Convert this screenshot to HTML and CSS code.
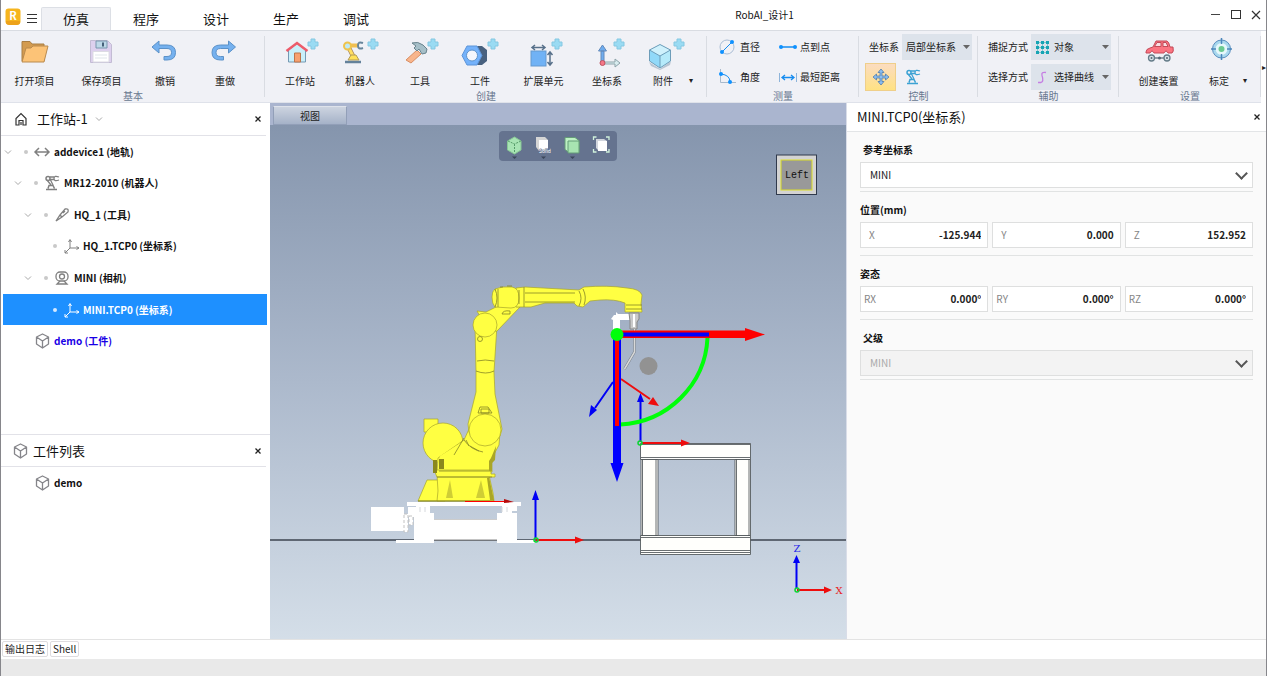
FILE: index.html
```html
<!DOCTYPE html>
<html lang="zh-CN">
<head>
	<meta charset="utf-8">
	<title>RobAI_设计1</title>
	<link rel="stylesheet" href="styles.css">
</head>
<body>
<!-- Shared symbols -->
<svg class="symbols" aria-hidden="true">
	<symbol id="plus" viewBox="0 0 12 12"><path d="M4 1h4v3h3v4H8v3H4V8H1V4h3z" fill="#9adbf3" stroke="#85c8e2"/></symbol>
	<symbol id="cube" viewBox="0 0 18 18"><path d="M9.500 2l6 3v7l-6 4-6-4V5zM3.500 5l6 4 6-4M9.500 9v7" fill="none" stroke="#85858a" stroke-width="1.3" stroke-linejoin="round"/></symbol>
	<symbol id="axes" viewBox="0 0 18 18"><path d="M8 3v8h9M8 11l-5 5M6.500 5L8 2.500 9.500 5M14.500 9.500L17 11l-2.500 1.500M3 13v3h3" fill="none" stroke="currentColor"/></symbol>
	<symbol id="chevron" viewBox="0 0 14 14"><path d="M4 5.500l3 3 3-3" fill="none" stroke="#a9a9a9"/></symbol>
	<symbol id="cross" viewBox="0 0 10 10"><path d="M2.500 2.500l5 5M7.500 2.500l-5 5" stroke="#222" stroke-width="1.300"/></symbol>
	<symbol id="arm" viewBox="0 0 18 18"><path d="M3 15.500h11M5 14.500l1-3h4l1.500 3" fill="none" stroke="currentColor" stroke-width="1.500"/><path d="M8 11L4 6M10 11L7 5M7 3h4M7 5.500h4M16 3q-5-2-5 1.500t5 1.500" fill="none" stroke="currentColor" stroke-width="1.300"/><circle cx="5" cy="4.500" r="2" fill="none" stroke="currentColor" stroke-width="1.500"/></symbol>
</svg>

<div class="window">
	<header class="titleBar">
		<svg class="logo" viewBox="0 0 16 17"><rect x=".500" y=".500" width="15" height="16" rx="3" fill="#f6b51e"/><path d="M1 13h14v1q0 3-3 3H4q-3 0-3-3z" fill="#eda21a"/><text x="8" y="12" class="logoText">R</text></svg>
		<button class="menuButton" aria-label="菜单"><svg width="12" height="11"><path d="M1 1.500h10M1 5.500h10M1 9.500h10" stroke="#333"/></svg></button>
		<nav class="tabs">
			<button class="tab active">仿真</button>
			<button class="tab">程序</button>
			<button class="tab">设计</button>
			<button class="tab">生产</button>
			<button class="tab">调试</button>
		</nav>
		<div class="windowTitle">RobAI_设计1</div>
		<div class="windowButtons">
			<button aria-label="最小化"><svg width="12" height="12"><path d="M1 5.500h9" stroke="#444"/></svg></button>
			<button aria-label="最大化"><svg width="12" height="12"><rect x="1.500" y="1.500" width="9" height="8" fill="none" stroke="#333"/></svg></button>
			<button aria-label="关闭"><svg width="12" height="12"><path d="M2 2l8 8M10 2l-8 8" stroke="#333" stroke-width="1.200"/></svg></button>
		</div>
	</header>

	<div class="ribbon">
		<section class="group">
			<div class="groupBody">
				<button class="tool wide">
					<svg viewBox="0 0 36 32"><path d="M5 24V4.500h8l2 2.500h12v17z" fill="#d39b50" stroke="#a97e45"/><path d="M5 25l4-14h5l2-2h15l-4 16z" fill="#fcc377" stroke="#b98a4e"/></svg>
					打开项目</button>
				<button class="tool wide">
					<svg viewBox="0 0 36 32"><path d="M6.500 3.500h17l4 4v18h-21z" fill="#ddd0ee" stroke="#c3bcd4"/><path d="M12 4h11v7H12z" fill="#bed8e8" stroke="#7996ad"/><path d="M19 5.500v4" stroke="#456079" stroke-width="2"/><path d="M9 14.500h16V25H9z" fill="#fff" stroke="#dcdbe3"/><path d="M11 18h12M11 21h12" stroke="#dfe5ea"/></svg>
					保存项目</button>
				<button class="tool">
					<svg viewBox="0 0 36 32"><path d="M5 10l7-6v4h8q8.500 0 8.500 7.500T20 23h-3v-3.500h3q4.500 0 4.500-4t-4.500-4h-8V16z" fill="#75b1ef" stroke="#5b91c8" stroke-linejoin="round"/></svg>
					撤销</button>
				<button class="tool">
					<svg viewBox="0 0 36 32"><path d="M28.500 10l-7-6v4h-8Q5 8 5 15.500T13.500 23h3v-3.500h-3q-4.500 0-4.500-4t4.500-4h8V16z" fill="#75b1ef" stroke="#5b91c8" stroke-linejoin="round"/></svg>
					重做</button>
			</div>
			<div class="groupName">基本</div>
		</section>

		<section class="group create">
			<div class="groupBody">
				<button class="tool">
					<svg viewBox="0 0 36 32"><path d="M6.500 25V13L15 6.500l8.500 6.500v12z" fill="#c9effa" stroke="#7499b3"/><path d="M12.500 25v-9h6v9z" fill="#f7a06f" stroke="#bd744a"/><path d="M4.500 14L15 6l10.500 8" fill="none" stroke="#ed5b6a" stroke-width="2.500"/><use href="#plus" x="25" y="1" width="12" height="12"/></svg>
					工作站</button>
				<button class="tool">
					<svg viewBox="0 0 36 32"><path d="M3 25h16" stroke="#64829b" stroke-width="2.500"/><path d="M6 9l5 10" stroke="#a4835a" stroke-width="4.500"/><path d="M6 9l5 10" stroke="#ffdf62" stroke-width="3"/><path d="M9 8.500h7" stroke="#f0be50" stroke-width="4"/><circle cx="5.500" cy="9" r="3.500" fill="#bfeaf5" stroke="#efc34c" stroke-width="2"/><path d="M21 6q-5-2-5 2.500t5 2.500" fill="none" stroke="#67859b" stroke-width="2"/><path d="M6 23l3-5h5l3 5z" fill="#ffe159" stroke="#b29b58"/><use href="#plus" x="25" y="1" width="12" height="12"/></svg>
					机器人</button>
				<button class="tool">
					<svg viewBox="0 0 36 32"><path d="M4 23L15 13l4 4L9 26z" fill="#f8b58c" stroke="#d98e63"/><path d="M10 6q6-2 11 2l4 4-1 4-4 1-3-5-2 2-3-3 2-2z" fill="#a6bfc8" stroke="#69838d" stroke-linejoin="round"/><use href="#plus" x="25" y="1" width="12" height="12"/></svg>
					工具</button>
				<button class="tool">
					<svg viewBox="0 0 36 32"><path d="M12 9h8l5 4v11l-5 4h-8z" fill="#48617f"/><path d="M5 9h10l5 9.500-5 9.500H5L0 18.500z" fill="#74b2fb" stroke="#5c94d8"/><circle cx="10" cy="18.500" r="5.500" fill="#f4f6fc" stroke="#5e93ca"/><use href="#plus" x="25" y="1" width="12" height="12"/></svg>
					工件</button>
				<button class="tool wide">
					<svg viewBox="0 0 36 32"><rect x="5" y="14" width="15" height="15" fill="#70b2f5" stroke="#6499ce"/><path d="M6 10.500h13M24 15v13M9 8l-3 2.500L9 13M16 8l3 2.500-3 2.500M21.500 18l2.500-3 2.500 3M21.500 25l2.500 3 2.500-3" fill="none" stroke="#57708a" stroke-width="1.500"/><use href="#plus" x="25" y="1" width="12" height="12"/></svg>
					扩展单元</button>
				<button class="tool">
					<svg viewBox="0 0 36 32"><path d="M12 14h3v12h-3zM9.500 14l4-6 4 6z" fill="#6eacef" stroke="#638abb"/><path d="M15 25h11v-3l5 4-5 4v-3H15z" fill="#d8ecef" stroke="#8da3a9"/><circle cx="13.500" cy="26" r="2.500" fill="#f47787" stroke="#bf5362"/><use href="#plus" x="24" y="1" width="12" height="12"/></svg>
					坐标系</button>
				<button class="tool small">
					<svg viewBox="0 0 36 32"><path d="M15 32L4 25l2 4 9 4 10-5 1-4z" fill="#b8c5d2"/><path d="M4.500 13L15 7.500 25.500 13v11L15 31 4.500 24z" fill="#91d9f9"/><path d="M4.500 13L15 7.500 25.500 13 15 19z" fill="#cff1fc"/><path d="M15 19l10.500-6v11L15 31z" fill="#b5eafa"/><path d="M4.500 13L15 7.500 25.500 13v11L15 31 4.500 24V13L15 19l10.500-6M15 19v12" fill="none" stroke="#6d9db9"/><use href="#plus" x="28" y="1" width="12" height="12"/></svg>
					附件</button>
				<button class="more" aria-label="更多附件">&#9662;</button>
			</div>
			<div class="groupName">创建</div>
		</section>

		<section class="group measure">
			<div class="groupBody">
				<div class="measureGrid">
					<button class="line"><svg width="18" height="18"><circle cx="9" cy="9" r="7" fill="none" stroke="#aabdd5"/><path d="M4 14L14 4" stroke="#158cf0"/><circle cx="4" cy="14" r="2" fill="#0e91ff"/><circle cx="14" cy="4" r="2" fill="#0e91ff"/></svg>直径</button>
					<button class="line"><svg width="20" height="18"><path d="M2 9h16" stroke="#158cf0" stroke-width="1.500"/><circle cx="3" cy="9" r="2" fill="#0e91ff"/><circle cx="17" cy="9" r="2" fill="#0e91ff"/></svg>点到点</button>
					<button class="line"><svg width="18" height="18"><path d="M2.500 1v13.500H18" fill="none" stroke="#a8b9cc"/><path d="M3 6q9 1 9 8" fill="none" stroke="#158cf0"/><circle cx="3" cy="6" r="2" fill="#0e91ff"/><circle cx="12" cy="14" r="2" fill="#0e91ff"/></svg>角度</button>
					<button class="line"><svg width="20" height="18"><path d="M1.500 5v9M18.500 5v9" stroke="#8eb4da"/><path d="M4 9.500h12M7 7L4 9.500 7 12M13 7l3 2.500-3 2.500" fill="none" stroke="#158cf0" stroke-width="1.300"/></svg>最短距离</button>
				</div>
			</div>
			<div class="groupName">测量</div>
		</section>

		<section class="group control">
			<div class="groupBody rows">
				<div class="field">
					<label for="frameSelect">坐标系</label>
					<div class="combo"><select id="frameSelect"><option>局部坐标系</option></select></div>
				</div>
				<div class="field">
					<button class="moveButton" aria-label="移动"><svg width="18" height="18"><path d="M9 1l3 3.500h-2V8h3.500V6L17 9l-3.500 3v-2H10v3.500h2L9 17l-3-3.500h2V10H4.500v2L1 9l3.500-3v2H8V4.500H6z" fill="#8abdf0" stroke="#517dac" stroke-width=".800"/></svg></button>
					<button class="robotButton" aria-label="机器人控制"><svg width="18" height="18"><use href="#arm"/></svg></button>
				</div>
			</div>
			<div class="groupName">控制</div>
		</section>

		<section class="group assist">
			<div class="groupBody rows">
				<div class="field">
					<label for="snapSelect">捕捉方式</label>
					<div class="combo"><svg width="15" height="15"><path d="M1 2.500h13M1 7.500h13M1 12.500h13M2.500 1v13M7.500 1v13M12.500 1v13" stroke="#7cc8d0"/><path d="M2.500 1v3M2.500 6v3M2.500 11v3M7.500 1v3M7.500 6v3M7.500 11v3M12.500 1v3M12.500 6v3M12.500 11v3" stroke="#16a4b4" stroke-width="3"/></svg><select id="snapSelect"><option>对象</option></select></div>
				</div>
				<div class="field">
					<label for="pickSelect">选择方式</label>
					<div class="combo"><svg width="15" height="15"><path d="M11 2.500q-5-1-4 3 2 6-1 7H3" fill="none" stroke="#c57ee3" stroke-width="1.300"/></svg><select id="pickSelect"><option>选择曲线</option></select></div>
				</div>
			</div>
			<div class="groupName">辅助</div>
		</section>

		<section class="group settings">
			<div class="groupBody">
				<button class="tool wide">
					<svg viewBox="0 0 36 32"><path d="M5 15q0-3 4-4l3-1 3-6h11q2 1 3 6h3q1 5-1 6h-4q-2-4-4 0H13q-2-4-4 0H5z" fill="#fb7481" stroke="#c34b59"/><path d="M13.500 9.500l2.500-4h4v4zM22 5.500h3l2 4h-5z" fill="#f8dfe3" stroke="#c34b59"/><path d="M12 21h16" stroke="#70818c" stroke-width="1.500"/><g fill="#d8e4e9" stroke="#657c89" stroke-width="1.300"><circle cx="10.500" cy="21" r="3"/><circle cx="26" cy="21" r="3"/></g><g fill="#556775"><circle cx="10.500" cy="21" r="1"/><circle cx="18.500" cy="21" r="1.500"/><circle cx="26" cy="21" r="1"/></g></svg>
					创建装置</button>
				<button class="tool">
					<svg viewBox="0 0 36 32"><circle cx="20.500" cy="12" r="7.500" fill="#e6f7fb" stroke="#a8d8ee" stroke-width="3"/><circle cx="20.500" cy="12" r="9" fill="none" stroke="#598ebe"/><circle cx="20.500" cy="12" r="3" fill="#6bca91"/><path d="M20.500 1v6M20.500 17v6M10 12h5M26 12h5" stroke="#4c86bb" stroke-width="1.500"/></svg>
					标定</button>
				<button class="more" aria-label="更多设置">&#9662;</button>
			</div>
			<div class="groupName">设置</div>
		</section>
		<button class="scrollRibbon" aria-label="展开">&#9656;</button>
	</div>

	<main class="workspace">
		<aside class="side">
			<section class="station">
				<div class="panelHead">
					<svg width="14" height="14"><path d="M2 6.500V13h3V8.500h4V13h3V6.500L7 1.500zM7 10v3" fill="none" stroke="#333" stroke-width="1.200"/></svg>
					<h2>工作站-1</h2>
					<svg width="14" height="14"><use href="#chevron"/></svg>
					<button class="close" aria-label="关闭"><svg width="10" height="10"><use href="#cross"/></svg></button>
				</div>
				<ul class="tree">
					<li><svg class="fold"><use href="#chevron"/></svg><i class="dot"></i><svg class="icon" viewBox="0 0 18 18"><path d="M2 9h14M6 5L2 9l4 4M12 5l4 4-4 4" fill="none" stroke="currentColor" stroke-width="1.500"/></svg>addevice1 (地轨)</li>
					<li class="level1"><svg class="fold"><use href="#chevron"/></svg><i class="dot"></i><svg class="icon"><use href="#arm"/></svg>MR12-2010 (机器人)</li>
					<li class="level2"><svg class="fold"><use href="#chevron"/></svg><i class="dot"></i><svg class="icon" viewBox="0 0 18 18"><path d="M3 15l4-6 5-6q4-1 3 3l-6 5zM7 9l2 2M10 7l2-2" fill="none" stroke="currentColor" stroke-width="1.300"/></svg>HQ_1 (工具)</li>
					<li class="level3"><span class="fold"></span><i class="dot"></i><svg class="icon"><use href="#axes"/></svg>HQ_1.TCP0 (坐标系)</li>
					<li class="level2"><svg class="fold"><use href="#chevron"/></svg><i class="dot"></i><svg class="icon" viewBox="0 0 18 18"><g fill="none" stroke="currentColor" stroke-width="1.300"><rect x="3" y="3" width="12" height="9" rx="4"/><circle cx="9" cy="7.500" r="2.500"/><path d="M7 12l-3 3h10l-3-3"/></g></svg>MINI (相机)</li>
					<li class="level3 selected"><span class="fold"></span><i class="dot"></i><svg class="icon"><use href="#axes"/></svg>MINI.TCP0 (坐标系)</li>
					<li class="part"><span class="fold"></span><i class="dot none"></i><svg class="icon"><use href="#cube"/></svg>demo (工件)</li>
				</ul>
			</section>
			<section class="partList">
				<div class="panelHead">
					<svg width="18" height="18"><use href="#cube"/></svg>
					<h2>工件列表</h2>
					<button class="close" aria-label="关闭"><svg width="10" height="10"><use href="#cross"/></svg></button>
				</div>
				<ul class="tree single">
					<li><span class="fold"></span><i class="dot none"></i><svg class="icon"><use href="#cube"/></svg>demo</li>
				</ul>
			</section>
		</aside>

		<section class="viewer">
			<div class="viewTabs"><button class="viewTab">视图</button></div>
			<div class="canvas">
				<svg class="scene" viewBox="270 125 576 514" preserveAspectRatio="xMidYMid meet">
					<path d="M0 540h2000" stroke="#3c454f" stroke-width="1.500"/>

					<!-- Ground rail -->
					<g fill="#fff">
						<path d="M407 502h114v4h-4v5h-5v2h5v27h18v3h-38v-3h-63v3h-38v-3h18v-23h-6v-10h8v-1h-9zM434 513v7h63v-7h5v-7h-72v7z" fill-rule="evenodd"/>
						<path d="M371 507h33v24h-33z"/>
						<path d="M404 514h4v18h-4zM409 516h4v9h-4z" stroke="#c3c3c3" stroke-dasharray="3 2"/>
						<path d="M434 520h63v19.500h-63z"/>
					</g>
					<path d="M434 519.500h63" stroke="#ccc"/>
					<path d="M434 540h63" stroke="#888"/>
					<path d="M420 507v5M425 507v5M502 507v5M507 507v5" stroke="#d5d8dc"/>

					<!-- Robot arm -->
					<g fill="#ffff42" stroke="#a8a52a" stroke-width=".700" stroke-linejoin="round">
						<path d="M427 480h18v21h-27z"/>
						<path d="M437 475h52l4 18 1 8h-57l1-10z"/>
						<path d="M424 419h14v13h-14z"/>
						<circle cx="443" cy="443" r="20"/>
						<path d="M438 458l26-18 5-11 31 3-1 13-7 13v14h-55z"/>
						<path d="M434 470h57v4h4v3h-58z"/>
						<path d="M475 325l1 47v20l-8 32q0 18 16 21 16-1 18-16l-7-35-1-22 3-47z"/>
						<circle cx="485" cy="430" r="16"/>
						<path d="M477 311l9 1 14-7 20 2-23 24-8 1z"/>
						<circle cx="485" cy="325" r="12"/>
						<path d="M516 288l9-1 54 3 5-3q24-2 43 1 13 1 15 7l-1 9 1 8h-17v-9q-10-4-25-3l-10 1-7 6-6-1-3-3h-29l-14 4h-15z"/>
						<path d="M495 289q7-3 17-2 7 1 7 11t-8 10l-16-1q-3-3-3-10 0-6 3-8z"/>
					</g>
					<path d="M440 456l24-15v20l-22 8z" fill="#ffff42"/>
					<g fill="none" stroke="#858526" stroke-width=".800">
						<path d="M495 289q4 9 0 18M498 289v18M519 290v14M524 287v20M525 293h50M525 302h50M579 291q4 7 0 15M583 289q4 8 1 16M500 287h3M507 286h5M626 305h16M626 309h16"/>
						<path d="M476 371q10 4 18 0M477 361q8-2 17 0"/>
						<path d="M478 413l2-6h8l4 6zM481 409h8v4h-8z"/>
						<path d="M464 438l-10 17M464 440q7 10 19 12M439 471h52M437 477h55M466 440l3 6M470 446l9 5"/>
						<circle cx="480" cy="339" r="2.500"/><path d="M502 314q1-4 8-3v3z"/>
					</g>
					<g fill="#8a871d"><path d="M433 460h4v13h-4zM439 459h5v10h-5z"/><path d="M491 458l5-12-1 14-3 3v8h-3v-10zM487 478l2-1 5 23h-4z" fill="#aaa626"/><path d="M450 480l3 18h-7zM481 480l4 18h-9z" fill="#cfcd35"/></g>
					<path d="M418 501h76" stroke="#898720"/>
					<path d="M465 501.500h44" stroke="#f00"/><path d="M504 499l10 3-10 1z" fill="#b60b0b"/>

					<!-- Camera and welding torch -->
					<path d="M613 331v-11l-2-1 3-4h2v-3l2 2h12v6h-10v11z" fill="#fff"/>
					<path d="M629 313h10v6l-2 3v7h-7v-8z" fill="#c9c9c9" stroke="#868686"/><path d="M634 314v13" stroke="#fff" stroke-width="2"/>
					<path d="M634.500 329v23l-10 17" fill="none" stroke="#737d88" stroke-width="2.500"/><path d="M634.500 329v23l-10 17" fill="none" stroke="#d8d8d8" stroke-width="1.500"/>
					<circle cx="648.500" cy="366" r="9" fill="#929292"/>

					<!-- Work table -->
					<g fill="#fffffc" stroke="#444a4d" stroke-width=".800">
						<path d="M641 459.500h17v76h-17zM735 459.500h15.500v76H735z"/>
						<path d="M640.500 443.500h110v16h-110zM640.500 535.500h110v19h-110z"/>
						<path d="M642.500 459.500v76M656 459.500v76M736.500 459.500v76M749 459.500v76M641 444.500h109M641 457.500h109M641 537.500h109M641 550.500h109M641 552.500h109" fill="none"/>
					</g>

					<!-- Coordinate frames -->
					<g stroke="#0000f5" fill="#0000f5">
						<path d="M613 382l-18 26M640.500 442v-43M535.500 538v-39M796.500 588v-28" stroke-width="2"/>
						<path d="M589 417l2-12 6 5zM637 402l3.500-9 3.500 9zM532 500l3.500-10 3.500 10zM793 563l3.500-8 3.500 8z" stroke="none"/>
					</g>
					<g stroke="#ee0d0d" fill="#ee0d0d">
						<path d="M621 379l29 20M642 443h40M536 540h40M797 590h29" stroke-width="2"/>
						<path d="M659 406l-11-2 5-7zM681 439.500l9 3.500-9 3.500zM575 536.500l9 3.500-9 3.500zM824 586.500l8 3.500-8 3.500z" stroke="none"/>
					</g>
					<g fill="none" stroke="#09d531" stroke-width="1.500"><circle cx="640" cy="443" r="2"/><circle cx="536" cy="540" r="2"/><circle cx="797" cy="590" r="2"/></g>
					<text class="axis z" x="797" y="552">Z</text>
					<text class="axis x" x="839" y="594">X</text>

					<!-- Drag handle -->
					<path d="M707.500 338A92 91 0 0 1 620 424.500" fill="none" stroke="#00ff09" stroke-width="4"/>
					<path d="M617 330.500h128V328l20 6.500-20 6.500v-3H617z" fill="#f00"/>
					<path d="M617 332.500h92v4h-92z" fill="#00f"/>
					<path d="M613 334h8v129h2.500L617 482l-6.500-19h2.500z" fill="#00f"/>
					<path d="M615 334h4v92h-4z" fill="#f00"/>
					<circle cx="617" cy="334.500" r="6.500" fill="#00ff09"/>

					<!-- View cube -->
					<rect x="776.500" y="155" width="40" height="39.500" fill="#d3d3d3" stroke="#303a4c"/>
					<rect x="781" y="160" width="31" height="30" fill="#999" stroke="#dddf26"/>
					<text class="cubeText" x="797" y="178">Left</text>
				</svg>
				<div class="viewTools">
					<button aria-label="视角"><svg viewBox="0 0 24 26"><path d="M5.500 7l7-4 6.500 4v9l-6.500 4-7-4z" fill="#a8e4b4" stroke="#87c695"/><path d="M6 7l6.500 3L19 7M12.500 10v9" fill="none" stroke="#579d6a" stroke-dasharray="2 1"/><path d="M10 22.500h5l-2.500 2.500z" fill="#3c465a"/></svg></button>
					<button aria-label="显示模式"><svg viewBox="0 0 24 26"><path d="M5 3h9l3 3v11H8l-3-4z" fill="#d5d5d5"/><path d="M8 6h9v11H8z" fill="#fff"/><text x="14" y="19" class="tinyText">Solid</text><path d="M10 22.500h5l-2.500 2.500z" fill="#3c465a"/></svg></button>
					<button aria-label="着色"><svg viewBox="0 0 24 26"><path d="M5 3.500h10l4 3v12H9l-4-3z" fill="#bdf1c3" stroke="#659c78"/><path d="M8 7h11v12H8z" fill="#a7e4b1" stroke="#659c78"/><path d="M10 22.500h5l-2.500 2.500z" fill="#3c465a"/></svg></button>
					<button aria-label="适应窗口"><svg viewBox="0 0 24 26"><path d="M7 5h8l3 2v10h-8l-3-3z" fill="#d1d5dd"/><path d="M9 7h9v10H9z" fill="#fff"/><path d="M4.500 6V3h3M17 3h3v3M20 15v3h-3M7.500 18h-3v-3" fill="none" stroke="#d0f2dc" stroke-width="1.300"/></svg></button>
				</div>
			</div>
		</section>

		<aside class="inspector">
			<div class="inspectorHead">
				<h2>MINI.TCP0(坐标系)</h2>
				<button class="close" aria-label="关闭"><svg width="10" height="10"><use href="#cross"/></svg></button>
			</div>
			<form class="properties">
				<div class="property choice">
					<label class="caption inset" for="reference">参考坐标系</label>
					<div class="choiceBox"><select id="reference"><option>MINI</option></select></div>
				</div>
				<fieldset class="property">
					<legend class="caption">位置(mm)</legend>
					<div class="values">
						<div class="value"><label for="posX">X</label><input id="posX" value="-125.944"></div>
						<div class="value"><label for="posY">Y</label><input id="posY" value="0.000"></div>
						<div class="value"><label for="posZ">Z</label><input id="posZ" value="152.952"></div>
					</div>
				</fieldset>
				<fieldset class="property">
					<legend class="caption">姿态</legend>
					<div class="values rotation">
						<div class="value"><label for="rotX">RX</label><input id="rotX" value="0.000°"></div>
						<div class="value"><label for="rotY">RY</label><input id="rotY" value="0.000°"></div>
						<div class="value"><label for="rotZ">RZ</label><input id="rotZ" value="0.000°"></div>
					</div>
				</fieldset>
				<div class="property choice">
					<label class="caption inset" for="parent">父级</label>
					<div class="choiceBox disabled"><select id="parent" disabled><option>MINI</option></select></div>
				</div>
			</form>
		</aside>
	</main>

	<div class="bottomTabs">
		<button>输出日志</button>
		<button>Shell</button>
	</div>
	<footer class="statusBar"></footer>
</div>
</body>
</html>
```
FILE: styles.css
```css
* {
	box-sizing: border-box;
}

body {
	margin: 0;
	font-family: "Noto Sans CJK SC", "Noto Sans", sans-serif;
	font-size: 10px;
	line-height: 14px;
	color: #222;
}

button, select, input {
	font: inherit;
	color: inherit;
	margin: 0;
	padding: 0;
	border: 0;
	background: none;
}

h2 {
	margin: 0;
	font-size: 13px;
	font-weight: normal;
	line-height: 20px;
	color: #111;
}

svg {
	display: block;
	flex: none;
}

.symbols {
	position: absolute;
	width: 0;
	height: 0;
}

.window {
	display: flex;
	flex-direction: column;
	height: 100vh;
	border-left: 1px solid #86868b;
	border-right: 1px solid #86868b;
	background: #fff;
}

/* Title bar */
.titleBar {
	display: flex;
	align-items: center;
	height: 30px;
	padding: 0 4px;
}

.logo {
	width: 16px;
	height: 17px;
	margin-top: 2px;
}

.logoText {
	font-size: 11px;
	font-weight: bold;
	text-anchor: middle;
	fill: #fff;
}

.menuButton {
	margin: 6px 3px 0 5px;
}

.tabs {
	display: flex;
	align-self: flex-end;
	height: 23px;
}

.tab {
	width: 70px;
	font-size: 13px;
	line-height: 20px;
	color: #111;
	padding-top: 1px;
}

.tab.active {
	background: #f0f1f5;
	border: 1px solid #dcdfe5;
	border-bottom: 0;
	border-radius: 2px 2px 0 0;
	padding-top: 0;
}

.windowTitle {
	flex: 1;
	text-align: center;
	padding-right: 72px;
	color: #111;
}

.windowButtons {
	display: flex;
	gap: 8px;
}

/* Ribbon */
.ribbon {
	display: grid;
	grid-template-columns: 264fr 442fr 152fr 119fr 141fr 142fr 5px;
	height: 73px;
	background: #f0f1f6;
	border-top: 1px solid #d9dce2;
	border-bottom: 1px solid #dfe2ea;
}

.group {
	display: flex;
	flex-direction: column;
	min-width: 0;
	background: linear-gradient(#d9dce2, #d9dce2) right 5px / 1px 61px no-repeat;
}

.groupBody {
	display: flex;
	height: 58px;
}

.groupName {
	text-align: center;
	color: #68788f;
}

.create .groupBody {
	padding-left: 5px;
}

.tool {
	display: flex;
	flex-direction: column;
	align-items: center;
	width: 60px;
	padding-top: 6px;
	white-space: nowrap;
}

.tool svg {
	width: 36px;
	height: 32px;
	margin-bottom: 5px;
	overflow: visible;
}

.tool.wide {
	width: 67px;
}

.tool.small {
	width: 52px;
}

.more {
	align-self: flex-end;
	font-size: 8px;
	padding-bottom: 2px;
}

.measureGrid {
	display: grid;
	grid-template-columns: 60px auto;
	grid-template-rows: 30px 30px;
	margin: 1px 0 0 11px;
}

.line {
	display: flex;
	align-items: center;
	gap: 4px;
	white-space: nowrap;
}

.line:nth-child(even) {
	gap: 2px;
}

.rows {
	flex-direction: column;
	padding: 3px 8px 0 10px;
	gap: 4px;
}

.field {
	display: flex;
	align-items: center;
	gap: 3px;
	height: 26px;
	white-space: nowrap;
}

.combo {
	flex: 1;
	display: flex;
	align-items: center;
	min-width: 0;
	height: 26px;
	padding-left: 4px;
	background: #dde3eb;
}

.combo select {
	flex: 1;
	min-width: 0;
	height: 26px;
	appearance: none;
	background: url("data:image/svg+xml,%3Csvg xmlns='http://www.w3.org/2000/svg' width='7' height='4'%3E%3Cpath d='M0 0h7L3.5 4z' fill='%23666'/%3E%3C/svg%3E") right 2px center no-repeat;
}

.control .rows {
	padding-right: 6px;
}

.assist .combo select {
	padding-left: 4px;
}

.moveButton {
	display: grid;
	place-items: center;
	width: 31px;
	height: 28px;
	margin-left: -4px;
	background: linear-gradient(#fbdcc0, #ffe283);
	border: 1px solid #efcf8a;
}

.robotButton {
	margin-left: 5px;
	color: #3ba2d3;
}

.settings .groupBody {
	padding-left: 6px;
}

.settings .tool:nth-child(2) {
	margin-left: -3px;
}

.settings .more {
	margin-left: -6px;
}

.scrollRibbon {
	font-size: 8px;
	width: 5px;
	background: #fff;
}

/* Work area */
.workspace {
	flex: 1;
	display: grid;
	grid-template-columns: 269px 1fr 420px;
	min-height: 0;
}

.side {
	display: flex;
	flex-direction: column;
}

.station {
	flex: 1;
}

.partList {
	height: 205px;
	border-top: 1px solid #e2e2e8;
}

.panelHead {
	display: flex;
	align-items: center;
	height: 33px;
	margin-right: 4px;
	padding-left: 13px;
	border-bottom: 1px solid #e2e2e8;
}

.panelHead h2 {
	margin: 0 4px 0 9px;
}

.partList .panelHead {
	height: 32px;
	padding-left: 10px;
}

.partList .panelHead h2 {
	margin-left: 4px;
}

.close {
	margin-left: auto;
	margin-right: 3px;
}

.tree {
	display: grid;
	grid-template-rows: repeat(7, 1fr);
	height: 221px;
	margin: 0;
	padding: 0;
	list-style: none;
	font-weight: bold;
	color: #111;
}

.tree.single {
	display: block;
	height: 32px;
}

.tree li {
	display: flex;
	align-items: center;
	height: 100%;
	white-space: nowrap;
}

.fold {
	width: 14px;
	height: 14px;
	margin-right: 4px;
}

.dot {
	width: 4px;
	height: 4px;
	margin: 0 5px;
	border-radius: 50%;
	background: #c9c9c9;
}

.dot.none {
	background: none;
}

.icon {
	width: 18px;
	height: 18px;
	margin-right: 3px;
	color: #808080;
}

.tree .level1 {
	padding-left: 10px;
}

.tree .level2 {
	padding-left: 20px;
}

.tree .level3 {
	padding-left: 29px;
}

.tree .selected {
	margin: 0 3px 0 2px;
	padding-left: 27px;
	background: #1e90ff;
	color: #fff;
}

.selected .icon {
	color: #fff;
}

.selected .dot {
	background: #d6e9ff;
}

.tree .part {
	color: #1800e6;
}

/* 3D view */
.viewer {
	display: flex;
	flex-direction: column;
	min-width: 0;
	min-height: 0;
}

.viewTabs {
	height: 22px;
	padding: 3px 3px 0;
	background: #aab5cf;
}

.viewTab {
	width: 74px;
	height: 19px;
	background: linear-gradient(#cdd4e0, #a5b2c8);
	border: 1px solid #929fb8;
	border-top-color: #dfe3eb;
}

.canvas {
	position: relative;
	flex: 1;
	min-height: 0;
	background: linear-gradient(#8595ad, #acb9cc 50%, #d4dee8);
}

.scene {
	width: 100%;
	height: 100%;
}

.axis {
	font-family: "DejaVu Serif", serif;
	font-size: 10px;
	text-anchor: middle;
}

.axis.z {
	fill: #2424e8;
}

.axis.x {
	fill: #e82020;
}

.cubeText {
	font-family: "Liberation Mono", monospace;
	font-size: 10px;
	text-anchor: middle;
	fill: #111;
}

.viewTools {
	position: absolute;
	top: 6px;
	left: 50%;
	transform: translateX(-50%);
	display: flex;
	justify-content: center;
	gap: 5px;
	width: 118px;
	height: 30px;
	padding: 2px 2px 0 0;
	background: #65738f;
	border-radius: 4px;
}

.viewTools svg {
	width: 24px;
	height: 26px;
	overflow: visible;
}

.tinyText {
	font-size: 5px;
	text-anchor: middle;
	fill: #fff;
	stroke: #65738f;
	stroke-width: 1px;
	paint-order: stroke;
}

/* Properties */
.inspector {
	background: #fafafa;
	border-left: 1px solid #d9dde8;
}

.inspectorHead {
	display: flex;
	align-items: center;
	height: 29px;
	padding-left: 10px;
	background: #fff;
	border-bottom: 1px solid #e3e5e7;
}

.inspectorHead .close {
	margin-right: 4px;
}

.properties {
	padding: 9px 13px 0 13px;
}

.property {
	margin: 0 0 9px;
	padding: 0 0 6px;
	border: 0;
	border-bottom: 1px solid #e1e3e3;
	min-width: 0;
}

.property.choice {
	padding-bottom: 3px;
}

.caption {
	display: block;
	margin-bottom: 3px;
	padding: 0;
	font-weight: bold;
	line-height: 18px;
	color: #111;
}

.caption.inset {
	padding-left: 3px;
}

.choiceBox {
	position: relative;
	height: 26px;
	background: #fff;
	border: 1px solid #dedfdf;
}

.choiceBox::after {
	content: "";
	position: absolute;
	right: 6px;
	top: 6px;
	width: 7px;
	height: 7px;
	border: solid #555;
	border-width: 0 2px 2px 0;
	transform: rotate(45deg);
	pointer-events: none;
}

.choiceBox select {
	width: 100%;
	height: 24px;
	padding-left: 9px;
	appearance: none;
}

.choiceBox.disabled {
	background: #f3f3f3;
}

.choiceBox select:disabled {
	color: #aaa;
	opacity: 1;
}

.values {
	display: grid;
	grid-template-columns: repeat(3, 1fr);
	gap: 4px;
}

fieldset.property {
	padding-bottom: 7px;
}

.value {
	display: flex;
	align-items: center;
	height: 26px;
	padding: 0 6px 0 8px;
	background: #fff;
	border: 1px solid #dedfdf;
}

.rotation .value {
	padding-left: 3px;
}

.value label {
	color: #858585;
}

.value input {
	flex: 1;
	min-width: 0;
	width: 0;
	text-align: right;
	font-weight: bold;
}

/* Bottom */
.bottomTabs {
	display: flex;
	gap: 2px;
	height: 20px;
	padding: 1px 1px 2px;
	border-top: 1px solid #e3e3e3;
}

.bottomTabs button {
	padding: 0 2px;
	border: 1px solid #dedcdf;
	border-radius: 2px;
}

.statusBar {
	height: 17px;
	background: #e9e9e9;
}
```
